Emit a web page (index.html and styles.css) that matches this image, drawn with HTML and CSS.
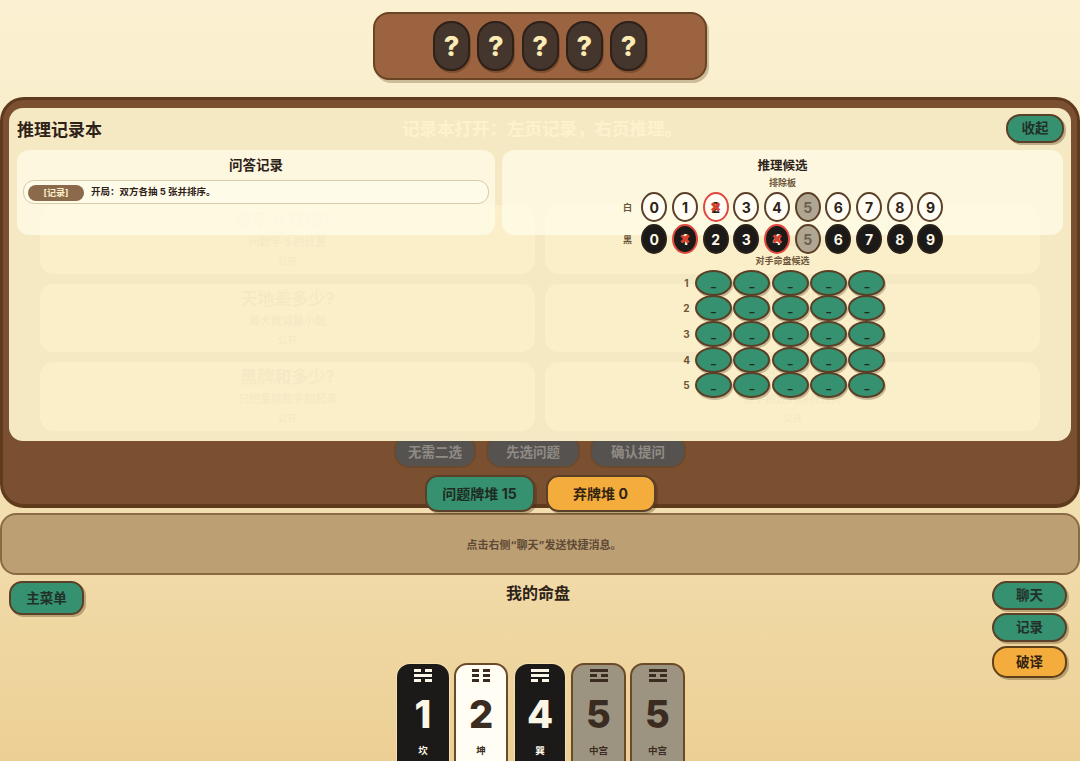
FILE: index.html
```html
<!DOCTYPE html>
<html lang="zh-CN">
<head>
  <meta charset="UTF-8" />
  <meta name="viewport" content="width=device-width, initial-scale=1.0"/>
  <title>推理记录本</title>
  <link rel="stylesheet" href="styles.css">
</head>
<body>

  <div class="opponent">
    <div class="hidden-tile">?</div>
    <div class="hidden-tile">?</div>
    <div class="hidden-tile">?</div>
    <div class="hidden-tile">?</div>
    <div class="hidden-tile">?</div>
  </div>

  <section class="board">
    <div class="status">记录本打开：左页记录，右页推理。</div>

    <div class="questions">
      <div class="question"><h4>数字 5 在哪？</h4><p>问数字 5 的位置</p><span>公开</span></div>
      <div class="question"><h4>白牌和多少?</h4><p>只把白牌数字加起来</p><span>公开</span></div>
      <div class="question"><h4>天地差多少?</h4><p>最大数减最小数</p><span>公开</span></div>
      <div class="question"><h4>总和多少?</h4><p>五张牌的数字相加</p><span>公开</span></div>
      <div class="question"><h4>黑牌和多少?</h4><p>只把黑牌数字加起来</p><span>公开</span></div>
      <div class="question"><h4>相邻有几对?</h4><p>数字相连的牌有几对</p><span>公开</span></div>
    </div>

    <div class="actions">
      <button class="btn-off">无需二选</button>
      <button class="btn-off">先选问题</button>
      <button class="btn-off">确认提问</button>
    </div>

    <div class="piles">
      <div class="pile pile-green">问题牌堆 15</div>
      <div class="pile pile-amber">弃牌堆 0</div>
    </div>

    <!-- notebook lies over the board -->
    <div class="notebook">
      <div class="notebook-head">
        <h2>推理记录本</h2>
        <button class="btn btn-close">收起</button>
      </div>
      <div class="pages">
        <div class="page">
          <h3>问答记录</h3>
          <div class="log-row">
            <span class="log-tag">[记录]</span>
            <span class="log-text">开局：双方各抽 5 张并排序。</span>
          </div>
        </div>
        <div class="page page-right">
          <h3>推理候选</h3>
          <div class="caption">排除板</div>
          <div class="digit-row">
            <span class="row-label">白</span>
            <span class="digit">0</span>
            <span class="digit">1</span>
            <span class="digit struck">2</span>
            <span class="digit">3</span>
            <span class="digit">4</span>
            <span class="digit grey">5</span>
            <span class="digit">6</span>
            <span class="digit">7</span>
            <span class="digit">8</span>
            <span class="digit">9</span>
          </div>
          <div class="digit-row">
            <span class="row-label">黑</span>
            <span class="digit black">0</span>
            <span class="digit black struck">1</span>
            <span class="digit black">2</span>
            <span class="digit black">3</span>
            <span class="digit black struck">4</span>
            <span class="digit grey">5</span>
            <span class="digit black">6</span>
            <span class="digit black">7</span>
            <span class="digit black">8</span>
            <span class="digit black">9</span>
          </div>
          <div class="caption caption-cand">对手命盘候选</div>
          <div class="cand-row"><span class="cand-label">1</span><span class="cand">_</span><span class="cand">_</span><span class="cand">_</span><span class="cand">_</span><span class="cand">_</span></div>
          <div class="cand-row"><span class="cand-label">2</span><span class="cand">_</span><span class="cand">_</span><span class="cand">_</span><span class="cand">_</span><span class="cand">_</span></div>
          <div class="cand-row"><span class="cand-label">3</span><span class="cand">_</span><span class="cand">_</span><span class="cand">_</span><span class="cand">_</span><span class="cand">_</span></div>
          <div class="cand-row"><span class="cand-label">4</span><span class="cand">_</span><span class="cand">_</span><span class="cand">_</span><span class="cand">_</span><span class="cand">_</span></div>
          <div class="cand-row"><span class="cand-label">5</span><span class="cand">_</span><span class="cand">_</span><span class="cand">_</span><span class="cand">_</span><span class="cand">_</span></div>
        </div>
      </div>
    </div>
  </section>

  <div class="chat-strip">点击右侧“聊天”发送快捷消息。</div>

  <section class="player">
    <div class="player-left">
      <button class="btn btn-menu">主菜单</button>
    </div>

    <div class="player-mid">
      <h3>我的命盘</h3>
      <div class="hand">
        <div class="card card-black w52">
          <div class="trigram"><i class="yin"><b></b><b></b></i><i></i><i class="yin"><b></b><b></b></i></div>
          <div class="num">1</div>
          <div class="name">坎</div>
        </div>
        <div class="card card-white w54">
          <div class="trigram"><i class="yin"><b></b><b></b></i><i class="yin"><b></b><b></b></i><i class="yin"><b></b><b></b></i></div>
          <div class="num">2</div>
          <div class="name">坤</div>
        </div>
        <div class="card card-black w50">
          <div class="trigram"><i></i><i></i><i class="yin"><b></b><b></b></i></div>
          <div class="num">4</div>
          <div class="name">巽</div>
        </div>
        <div class="card card-grey w55">
          <div class="trigram"><i></i><i class="yin"><b></b><b></b></i><i></i></div>
          <div class="num">5</div>
          <div class="name">中宫</div>
        </div>
        <div class="card card-grey w55">
          <div class="trigram"><i></i><i class="yin"><b></b><b></b></i><i></i></div>
          <div class="num">5</div>
          <div class="name">中宫</div>
        </div>
      </div>
    </div>

    <div class="player-right">
      <button class="btn btn-side">聊天</button>
      <button class="btn btn-side">记录</button>
      <button class="btn btn-side btn-amber">破译</button>
    </div>
  </section>

</body>
</html>
```

FILE: styles.css
```css
* {
  box-sizing: border-box;
}
html, body {
  height: 761px;
}
body {
  margin: 0;
  overflow: hidden;
  display: flex;
  flex-direction: column;
  font-family: "Inter", "Noto Sans CJK SC", sans-serif;
  color: #2e2218;
  background: linear-gradient(180deg, #fbf1d2 0%, #f5e6bc 50%, #eccf94 100%);
}
h2, h3, h4, p {
  margin: 0;
}
button {
  font-family: inherit;
  cursor: pointer;
}

/* opponent hand */
.opponent {
  flex: none;
  width: 334px;
  height: 68px;
  margin: 12px auto 17px;
  display: flex;
  justify-content: center;
  align-items: center;
  gap: 7.25px;
  background: #9c6340;
  border: 2px solid #6b4423;
  border-radius: 16px;
  box-shadow: 2px 3px 0 rgba(100, 70, 30, 0.3);
}
.hidden-tile {
  width: 37px;
  height: 50px;
  display: flex;
  align-items: center;
  justify-content: center;
  background: #44352d;
  border: 2px solid #2e2119;
  border-radius: 18px;
  box-shadow: 1px 2px 0 rgba(80, 40, 10, 0.35);
  color: #fcebb4;
  font-size: 27px;
  font-weight: 800;
}

/* board */
.board {
  flex: none;
  position: relative;
  height: 411px;
  padding: 17px 37px 0;
  background: #7a5030;
  border: 3px solid #5f3a1c;
  border-bottom-width: 4px;
  border-radius: 24px;
}
.status {
  height: 24px;
  line-height: 24px;
  padding-left: 4px;
  text-align: center;
  font-size: 17.5px;
  font-weight: 700;
  color: #fff3cc;
}
.questions {
  margin-top: 64px;
  display: grid;
  grid-template-columns: 495px 495px;
  grid-auto-rows: 68.5px;
  gap: 10px;
}
.question {
  background: #dec8a8;
  border-radius: 14px;
  text-align: center;
  padding-top: 3px;
  color: #6b5436;
}
.question h4 {
  font-size: 17px;
  line-height: 24px;
  font-weight: 700;
}
.question p {
  font-size: 11px;
  line-height: 20px;
  font-weight: 700;
}
.question span {
  font-size: 10px;
  line-height: 18px;
  display: block;
  font-weight: 700;
}
.actions {
  margin-top: 3.5px;
  display: flex;
  justify-content: center;
  gap: 10px;
}
.btn-off {
  height: 34px;
  padding: 0 10px;
  min-width: 82px;
  background: #565250;
  border: 2px solid #6b4a2f;
  border-radius: 15px;
  color: #8f8b85;
  font-size: 13.5px;
  font-weight: 700;
}
.btn-off:nth-child(2) {
  width: 94px;
}
.btn-off:nth-child(3) {
  width: 96px;
}
.piles {
  margin-top: 7px;
  display: flex;
  justify-content: center;
  gap: 11px;
}
.pile {
  width: 110px;
  height: 37px;
  padding-bottom: 2px;
  display: flex;
  align-items: center;
  justify-content: center;
  border: 2px solid #5a4028;
  border-radius: 13px;
  box-shadow: 2px 2px 0 rgba(60, 35, 10, 0.3);
  font-size: 14px;
  font-weight: 700;
}
.pile-green {
  background: #35916f;
  color: #1f2b22;
}
.pile-amber {
  background: #f4ad3d;
  color: #33230f;
}

/* notebook */
.notebook {
  position: absolute;
  left: 6px;
  right: 6px;
  top: 8px;
  height: 333px;
  padding: 0 8px;
  background: rgba(252, 241, 203, 0.95);
  border-radius: 14px;
}
.notebook-head {
  height: 42px;
  display: flex;
  align-items: center;
  justify-content: space-between;
}
.notebook-head h2 {
  margin-top: -2px;
  font-size: 17px;
  font-weight: 700;
}
.btn {
  border: 2px solid #5a4028;
  background: #35916f;
  color: #22302a;
  font-weight: 700;
  font-size: 13.5px;
  padding: 0 0 3px;
  box-shadow: 2px 2px 0 rgba(90, 60, 30, 0.35);
}
.btn-close {
  width: 58px;
  height: 29px;
  margin-top: -1px;
  margin-right: -1px;
  border-radius: 14px;
}
.pages {
  display: grid;
  grid-template-columns: 478px 561px;
  gap: 7px;
}
.page {
  height: 85px;
  padding: 6px 6px 0;
  background: rgba(255, 251, 232, 0.78);
  border-radius: 12px;
}
.page h3 {
  text-align: center;
  font-size: 13.5px;
  line-height: 19px;
  font-weight: 700;
}
.log-row {
  margin-top: 5px;
  height: 24px;
  display: flex;
  align-items: center;
  gap: 7px;
  padding-left: 4px;
  border: 1.5px solid #d8cda6;
  border-radius: 11px;
  background: #fffbe9;
}
.log-tag {
  width: 56px;
  height: 16px;
  line-height: 15px;
  margin-top: 1px;
  text-align: center;
  background: #8a6a4a;
  border-radius: 9px;
  color: #fbeec8;
  font-size: 9px;
  font-weight: 700;
}
.log-text {
  margin-top: -3px;
  font-size: 9.5px;
  font-weight: 700;
}
.page-right {
  padding-top: 7px;
}
.page-right h3 {
  font-size: 12.5px;
  line-height: 18px;
}
.caption {
  text-align: center;
  font-size: 9px;
  line-height: 13px;
  font-weight: 700;
  color: #6c5639;
  margin-top: 1px;
  margin-bottom: 2px;
}
.caption-cand {
  margin: -2px 0 2px;
  line-height: 15px;
}
.digit-row {
  height: 32px;
  display: flex;
  align-items: center;
  justify-content: center;
  gap: 4.7px;
}
.row-label {
  width: 12px;
  margin-right: 3px;
  font-size: 9px;
  font-weight: 700;
  color: #6c5639;
  text-align: center;
}
.digit {
  position: relative;
  width: 26px;
  height: 30px;
  display: flex;
  align-items: center;
  justify-content: center;
  background: #fffdf4;
  border: 2px solid #5a4028;
  border-radius: 50%;
  font-size: 14px;
  font-weight: 700;
  color: #2e2218;
}
.digit.black {
  background: #1c1a18;
  border-color: #2a2119;
  color: #fbf6e6;
}
.digit.grey {
  background: #b0a692;
  color: #6a604f;
}
.digit.struck {
  border-color: #e0483e;
}
/* red cross over a ruled out digit */
.digit.struck::after {
  content: "✖";
  position: absolute;
  left: 0;
  right: 0;
  text-align: center;
  font-family: "DejaVu Sans", sans-serif;
  font-size: 14px;
  color: #d8402f;
}
.cand-row {
  height: 25.6px;
  display: flex;
  align-items: center;
  justify-content: center;
  gap: 1.4px;
}
.cand-label {
  width: 14px;
  font-size: 10px;
  font-weight: 700;
  color: #6c5639;
  text-align: center;
}
.cand {
  width: 37px;
  height: 26px;
  display: flex;
  justify-content: center;
  align-items: center;
  background: #35916f;
  border: 2px solid #5a3f26;
  border-radius: 50%;
  box-shadow: 1px 2px 0 rgba(90, 60, 30, 0.3);
  font-size: 10px;
  font-weight: 800;
  color: #1f2a20;
}

/* chat hint */
.chat-strip {
  flex: none;
  height: 62px;
  margin-top: 5px;
  padding-left: 8px;
  display: flex;
  align-items: center;
  justify-content: center;
  background: #bd9f74;
  border: 2px solid #8b6b46;
  border-radius: 16px;
  font-size: 11px;
  font-weight: 700;
  color: #5d4a35;
}

/* player area */
.player {
  flex: 1;
  display: grid;
  grid-template-columns: 300px 1fr 300px;
  min-height: 0;
  overflow: hidden;
}
.player-left {
  padding: 6px 0 0 9px;
}
.btn-menu {
  width: 75px;
  height: 34px;
  border-radius: 13px;
}
.player-mid {
  text-align: center;
}
.player-mid h3 {
  margin-top: 7px;
  margin-left: -4px;
  font-size: 16px;
  line-height: 22px;
  font-weight: 700;
}
.hand {
  margin-top: 59px;
  margin-left: 2px;
  display: flex;
  justify-content: center;
  gap: 5px;
}
.card {
  flex: none;
  height: 110px;
  padding-top: 4px;
  border-radius: 13px;
  text-align: center;
}
.w50 { width: 50px; margin-left: 2px; margin-right: 1px; }
.w52 { width: 52px; }
.w54 { width: 54px; }
.w55 { width: 55px; }
.card-grey + .card-grey {
  margin-left: -1px;
}
.card-black {
  margin-top: 1px;
  padding-top: 5px;
  background: #1c1a18;
  color: #fbf6e6;
  box-shadow: 0 0 0 1px #f3e0b0;
}
.card-white {
  background: #fffdf4;
  border: 2px solid #6b4a2a;
  color: #3a2c20;
}
.card-grey {
  background: #9c9381;
  border: 2px solid #6b4a2a;
  color: #3a2c20;
}
.trigram {
  width: 18px;
  margin: 0 auto;
  display: flex;
  flex-direction: column;
  gap: 2.5px;
}
.trigram i {
  display: flex;
  justify-content: space-between;
  height: 2.5px;
  background: currentColor;
}
.trigram i.yin {
  background: none;
}
.trigram b {
  width: 7px;
  background: currentColor;
}
.num {
  margin-top: 9.5px;
  font-size: 38px;
  line-height: 46px;
  font-weight: 800;
}
.name {
  margin-top: 7px;
  font-size: 9.5px;
  line-height: 14px;
  font-weight: 700;
}
.player-right {
  padding: 6px 13px 0 0;
  display: flex;
  flex-direction: column;
  align-items: flex-end;
  gap: 3px;
}
.btn-side {
  width: 75px;
  height: 29px;
  border-radius: 15px;
}
.btn-amber {
  height: 32px;
  margin-top: 1px;
  background: #f4ad3d;
  color: #33230f;
  border-color: #5f4018;
}
```
